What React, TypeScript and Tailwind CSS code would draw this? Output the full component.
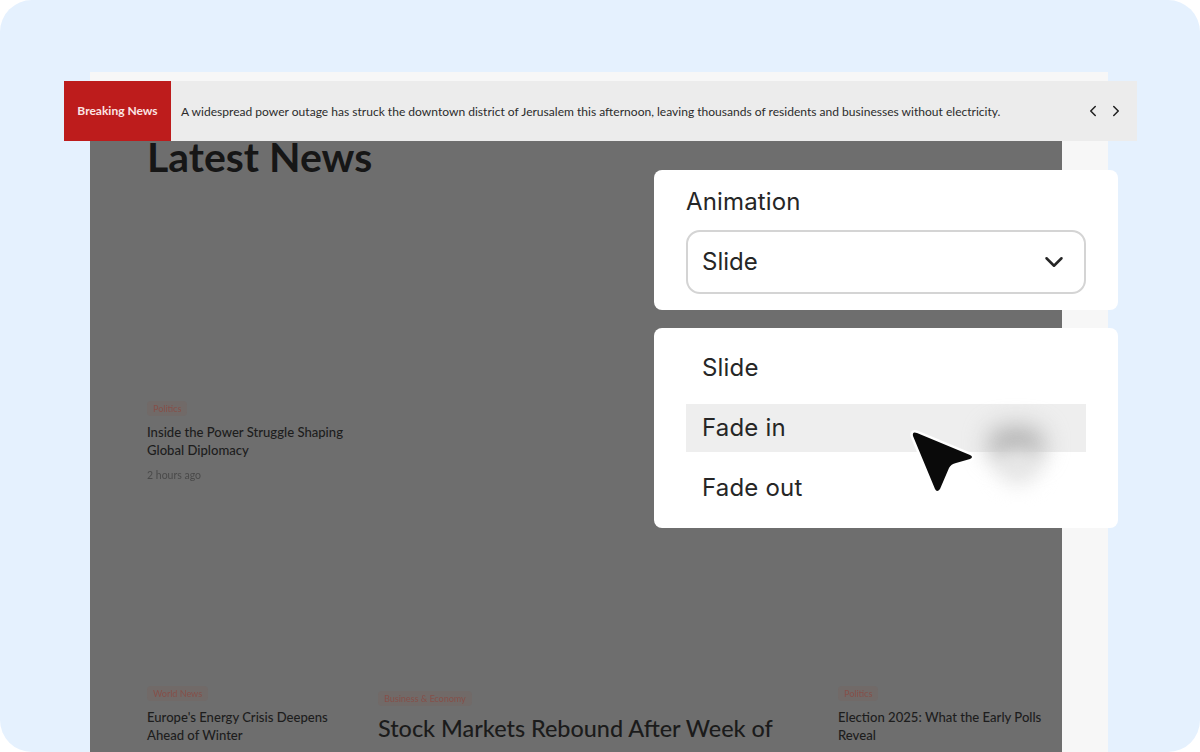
import React from 'react';
import { ChevronDown, ChevronLeft, ChevronRight } from 'lucide-react';

const newsFont = 'font-["Lato",sans-serif]';

function Tag({ label }: { label: string }) {
  return (
    <span className="inline-block rounded-sm bg-[#716a68] px-[6px] py-[1px] text-[9px] leading-[13px] text-[#854f49] blur-[0.6px]">
      {label}
    </span>
  );
}

function SmallStory({ tag, title, time }: { tag: string; title: string; time?: string }) {
  return (
    <div className="w-[206px]">
      <Tag label={tag} />
      <h3 className="mt-[5px] text-[13.1px] leading-[18px] font-medium text-[#1d1d1d]">{title}</h3>
      {time && <p className="mt-[9px] text-[10.5px] leading-[14px] text-[#4a4a4a] blur-[0.3px]">{time}</p>}
    </div>
  );
}

export default function App() {
  return (
    <div className="relative h-[752px] w-[1200px] overflow-hidden bg-white font-['Inter',sans-serif]">
      <div className="flex h-full flex-col rounded-[32px] bg-[#e5f1fe] pt-[72px] pl-[90px]">
        {/* Page behind the overlay */}
        <div className="w-[1018px] flex-1 bg-[#f7f7f7] pt-[69px]">
          <div className={`flex h-full w-[972px] flex-col overflow-hidden bg-[#6e6e6e] pl-[57px] ${newsFont}`}>
            <h1 className="-mt-[1px] text-[41px] leading-[34px] font-bold text-[#161616]">Latest News</h1>

            <div className="mt-[220px]">
              <SmallStory tag="Politics" title="Inside the Power Struggle Shaping Global Diplomacy" time="2 hours ago" />
            </div>

            <div className="mt-[197px] flex items-start">
              <div className="w-[231px]">
                <SmallStory tag="World News" title="Europe's Energy Crisis Deepens Ahead of Winter" />
              </div>
              <div className="w-[460px] pt-[5px]">
                <Tag label="Business & Economy" />
                <h2 className="mt-[4px] w-[410px] text-[23.4px] leading-[32px] font-medium text-[#1b1b1b]">
                  Stock Markets Rebound After Week of Volatility
                </h2>
              </div>
              <SmallStory tag="Politics" title="Election 2025: What the Early Polls Reveal" />
            </div>
          </div>
        </div>
      </div>

      {/* Breaking news ticker */}
      <div className={`absolute top-[81px] left-[64px] flex h-[60px] w-[1073px] items-center bg-[#ececec] ${newsFont}`}>
        <div className="flex h-full w-[107px] items-center justify-center bg-[#bd1c1c] text-[12px] font-bold text-[#fbe4e4]">
          Breaking News
        </div>
        <p className="ml-[10px] flex-1 pt-[2px] text-[12.05px] text-[#2b2b2b]">
          A widespread power outage has struck the downtown district of Jerusalem this afternoon, leaving thousands of residents and businesses without electricity.
        </p>
        <div className="mr-[12px] flex items-center gap-[5px] text-[#1f1f1f]">
          <ChevronLeft size={18} />
          <ChevronRight size={18} />
        </div>
      </div>

      {/* Animation select */}
      <div className="absolute top-[170px] left-[654px] w-[464px] rounded-[8px] bg-white px-[32px] pt-[18px] pb-[16px] text-[#262626]">
        <div className="text-[24px] leading-[28px] tracking-[0.15px]">Animation</div>
        <div className="mt-[14px] flex h-[64px] items-center justify-between rounded-[14px] border-2 border-[#d4d4d4] pr-[15px] pl-[14px]">
          <span className="text-[24px]">Slide</span>
          <ChevronDown size={30} strokeWidth={2} />
        </div>
      </div>

      {/* Dropdown options */}
      <div className="absolute top-[328px] left-[654px] w-[464px] rounded-[8px] bg-white px-[32px] py-[16px] text-[24px] text-[#262626]">
        <div className="flex h-[48px] items-center pl-[16px] tracking-[0.2px]">Slide</div>
        <div className="mt-[12px] flex h-[48px] items-center bg-[#eeeeee] pl-[16px] tracking-[0.2px]">Fade in</div>
        <div className="mt-[12px] flex h-[48px] items-center pl-[16px] tracking-[0.2px]">Fade out</div>
      </div>

      {/* Cursor and its soft shadow */}
      <div className="absolute top-[427px] left-[988px] h-[34px] w-[56px] rounded-full bg-[#b2b2b2] blur-[12px]" />
      <div className="absolute top-[450px] left-[998px] h-[34px] w-[40px] rounded-full bg-[#e6e6e6] blur-[10px]" />
      <svg className="absolute top-[420px] left-[900px]" width="90" height="80" viewBox="0 0 90 80">
        <path
          d="M13 16 Q12 11 17 13 L70 35 Q74 37 70 39 L56 43 Q51 44 49 48 L40 69 Q37 73 35 69 Z"
          fill="#0a0a0a"
          stroke="#ffffff"
          strokeWidth="5"
          strokeLinejoin="round"
          paintOrder="stroke"
        />
      </svg>
    </div>
  );
}
